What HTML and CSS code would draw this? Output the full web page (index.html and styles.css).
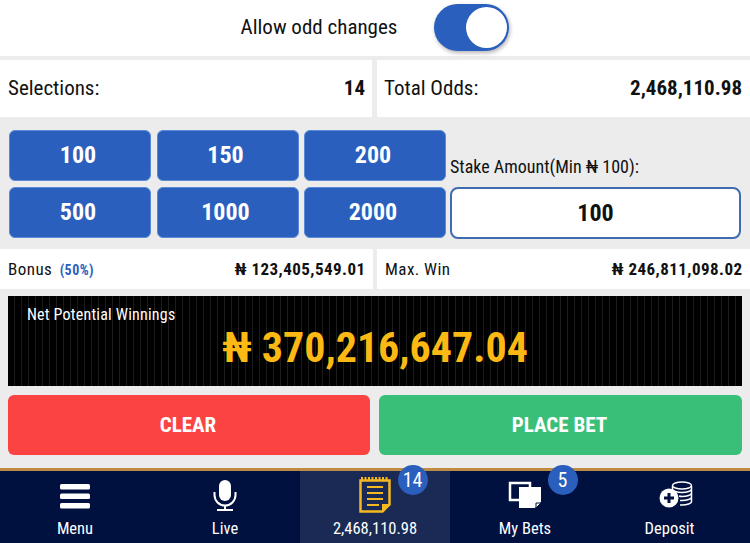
FILE: index.html
```html
<!DOCTYPE html>
<html lang="en">
<head>
  <meta charset="UTF-8">
  <title>Bet Slip</title>
  <link rel="stylesheet" href="styles.css">
</head>
<body>
  <div class="odds-toggle">
    <span class="odds-toggle-label">Allow odd changes</span>
    <span class="switch"><span class="switch-knob"></span></span>
  </div>

  <div class="summary-row">
    <div class="summary-cell"><span>Selections:</span><b>14</b></div>
    <div class="summary-cell"><span>Total Odds:</span><b>2,468,110.98</b></div>
  </div>

  <div class="stake-panel">
    <div class="quick-stakes">
      <button class="quick-btn">100</button>
      <button class="quick-btn">150</button>
      <button class="quick-btn">200</button>
      <button class="quick-btn">500</button>
      <button class="quick-btn">1000</button>
      <button class="quick-btn">2000</button>
    </div>
    <div class="stake-entry">
      <label class="stake-label">Stake Amount(Min ₦ 100):</label>
      <div class="stake-input">100</div>
    </div>
  </div>

  <div class="win-row">
    <div class="win-cell"><span>Bonus <em class="bonus-pct">(50%)</em></span><b>₦ 123,405,549.01</b></div>
    <div class="win-cell"><span>Max. Win</span><b>₦ 246,811,098.02</b></div>
  </div>

  <div class="net-wrap">
    <div class="net-box">
      <div class="net-label">Net Potential Winnings</div>
      <div class="net-amount">₦ 370,216,647.04</div>
    </div>
  </div>

  <div class="actions">
    <button class="action-btn clear">CLEAR</button>
    <button class="action-btn place">PLACE BET</button>
  </div>

  <nav class="tabbar">
    <div class="tab">
      <svg class="tab-icon" width="32" height="28" viewBox="0 0 32 28">
        <rect x="1" y="1" width="30" height="5.500" rx="1.500" fill="#fff"/>
        <rect x="1" y="10.500" width="30" height="5.500" rx="1.500" fill="#fff"/>
        <rect x="1" y="20" width="30" height="5.500" rx="1.500" fill="#fff"/>
      </svg>
      <span>Menu</span>
    </div>
    <div class="tab">
      <svg class="tab-icon" width="26" height="31" viewBox="0 0 26 31">
        <rect x="7" y="0" width="12" height="21" rx="6" fill="#fff"/>
        <path d="M2.500 12v3a10.500 10.500 0 0 0 21 0v-3" fill="none" stroke="#fff" stroke-width="2"/>
        <path d="M13 25.500V29M5 30h16" fill="none" stroke="#fff" stroke-width="2"/>
      </svg>
      <span>Live</span>
    </div>
    <div class="tab tab-active">
      <svg class="tab-icon tab-icon-slip" width="32" height="36" viewBox="0 0 32 36">
        <path d="M1.500 3.500h29v24l-7 7h-22z" fill="none" stroke="#f5b81f" stroke-width="2.500"/>
        <path d="M2 1.500h28" stroke="#f5b81f" stroke-width="3" stroke-dasharray="2 1.500"/>
        <path d="M8 10h16M8 16h16M8 22h16M8 28h12" stroke="#f5b81f" stroke-width="2"/>
        <path d="M23 35v-8h8z" fill="#f5b81f"/>
      </svg>
      <span>2,468,110.98</span>
      <span class="badge">14</span>
    </div>
    <div class="tab">
      <svg class="tab-icon tab-icon-low" width="34" height="28" viewBox="0 0 34 28">
        <path d="M11 20H2V3h20v5" fill="none" stroke="#fff" stroke-width="2.500"/>
        <path d="M11 7h22v15l-6 6H11z" fill="#fff"/>
        <path d="M28 28v-5h5z" fill="#fff" stroke="#00103f" stroke-width="1"/>
      </svg>
      <span>My Bets</span>
      <span class="badge">5</span>
    </div>
    <div class="tab tab-deposit">
      <svg class="tab-icon" width="34" height="28" viewBox="0 0 34 28">
        <g fill="none" stroke="#fff" stroke-width="1.500">
          <ellipse cx="23" cy="4.500" rx="9.500" ry="3.500"/>
          <path d="M13.500 5v3c0 2 4.500 3.500 9.500 3.500s9.500-1.500 9.500-3.500V5M20 15c1 .3 2 .5 3 .5 5 0 9.500-1.500 9.500-3.500V8M21 19.500h2c5 0 9.500-1.500 9.500-3.500v-4M21 24c1 0 1.500 0 2 0 5 0 9.500-1.500 9.500-3.500V16"/>
        </g>
        <circle cx="10" cy="17" r="9.500" fill="#fff"/>
        <path d="M10 12v10M5 17h10" stroke="#00103f" stroke-width="3"/>
      </svg>
      <span>Deposit</span>
    </div>
  </nav>
</body>
</html>
```

FILE: styles.css
```css
* {
  box-sizing: border-box;
}

body {
  margin: 0;
  height: 543px;
  overflow: hidden;
  background: #ececec;
  font-family: Roboto, 'Liberation Sans', sans-serif;
  font-stretch: 85%;
  color: #111;
}

b {
  font-weight: 700;
}

.odds-toggle {
  height: 56px;
  background: #fff;
  display: flex;
  align-items: center;
  justify-content: center;
  gap: 37px;
  padding-bottom: 1px;
}

.odds-toggle-label {
  font-size: 21px;
  padding-bottom: 2px;
}

.switch {
  width: 75px;
  height: 47px;
  border-radius: 24px;
  background: #2a5fbd;
  display: flex;
  align-items: center;
  justify-content: flex-end;
  padding-right: 2px;
  box-shadow: 1px 2px 4px rgba(0, 0, 0, 0.3);
}

.switch-knob {
  width: 41px;
  height: 41px;
  border-radius: 50%;
  background: #fff;
}

.summary-row {
  margin-top: 4px;
  display: flex;
  gap: 5px;
}

.summary-cell {
  flex: 1;
  height: 57px;
  background: #fff;
  display: flex;
  align-items: center;
  justify-content: space-between;
  padding: 0 8px 2px 7px;
  font-size: 21px;
}

.summary-cell:first-child {
  flex: none;
  width: 372px;
  padding: 0 7px 2px 8px;
}

.stake-panel {
  height: 132px;
  padding: 13px 9px 0;
  display: flex;
  gap: 4px;
}

.quick-stakes {
  width: 437px;
  display: grid;
  grid-template-columns: repeat(3, 142px);
  grid-template-rows: repeat(2, 51px);
  gap: 6px 5.500px;
}

.quick-btn {
  border: 1px solid #5a8ad6;
  border-radius: 6px;
  background: #2a5fbd;
  color: #fff;
  font-family: inherit;
  font-stretch: inherit;
  font-size: 24px;
  font-weight: 700;
  padding: 0 4px 2px 0;
}

.stake-entry {
  width: 291px;
  display: flex;
  flex-direction: column;
  justify-content: flex-end;
  height: 109px;
}

.stake-label {
  font-size: 18px;
  margin-bottom: 10px;
}

.stake-input {
  height: 52px;
  border: 2px solid #3f6cb0;
  border-radius: 8px;
  background: #fff;
  font-size: 24px;
  font-weight: 700;
  display: flex;
  align-items: center;
  justify-content: center;
}

.win-row {
  display: flex;
  gap: 4px;
}

.win-cell {
  height: 40px;
  background: #fff;
  display: flex;
  align-items: center;
  justify-content: space-between;
  padding: 0 7.500px 0 8px;
  font-size: 17px;
  letter-spacing: 0.45px;
}

.win-cell:first-child {
  width: 373px;
}

.win-cell:last-child {
  flex: 1;
}

.bonus-pct {
  font-style: normal;
  font-weight: 700;
  font-size: 14px;
  color: #2a5fbd;
  margin-left: 3px;
}

.net-wrap {
  padding: 7px 8px 0;
}

.net-box {
  height: 90px;
  background-color: #000;
  background-image: repeating-linear-gradient(90deg, #000 0, #000 6px, #1c1c1c 6px, #1c1c1c 7px);
  text-align: center;
}

.net-label {
  font-size: 16px;
  letter-spacing: 0.2px;
  color: #fff;
  text-align: left;
  padding: 9px 0 0 19px;
}

.net-amount {
  font-size: 42px;
  font-weight: 700;
  color: #fdb913;
  margin-top: -1px;
}

.actions {
  display: flex;
  gap: 9px;
  padding: 9px 8px 0;
}

.action-btn {
  flex: 1;
  height: 60px;
  border: 0;
  border-radius: 6px;
  color: #fff;
  font-family: inherit;
  font-stretch: inherit;
  font-size: 21px;
  font-weight: 700;
  padding: 0 2px 0 0;
}

.clear {
  flex: none;
  width: 362px;
  background: #fb4441;
}

.place {
  background: #3abf78;
}

.tabbar {
  margin-top: 13px;
  height: 75px;
  border-top: 3px solid #bd8b41;
  background: #00103f;
  display: flex;
}

.tab {
  flex: 1;
  position: relative;
  display: flex;
  flex-direction: column;
  align-items: center;
  justify-content: flex-end;
  padding-bottom: 4px;
  color: #fff;
  font-size: 16.500px;
  line-height: 20px;
}

.tab-icon {
  margin-bottom: 8px;
}

.tab-icon-slip {
  margin-bottom: 6px;
}

.tab-icon-low {
  margin-bottom: 11px;
}

.tab-deposit .tab-icon {
  margin-bottom: 10px;
  margin-left: 2px;
}

.tab-deposit span {
  margin-right: 11px;
}

.tab-active {
  background: #1a2a55;
}

.badge {
  position: absolute;
  top: -6px;
  left: 98px;
  width: 30px;
  height: 30px;
  padding-right: 1px;
  border-radius: 50%;
  background: #2a5fbd;
  font-size: 20px;
  display: flex;
  align-items: center;
  justify-content: center;
}
```
